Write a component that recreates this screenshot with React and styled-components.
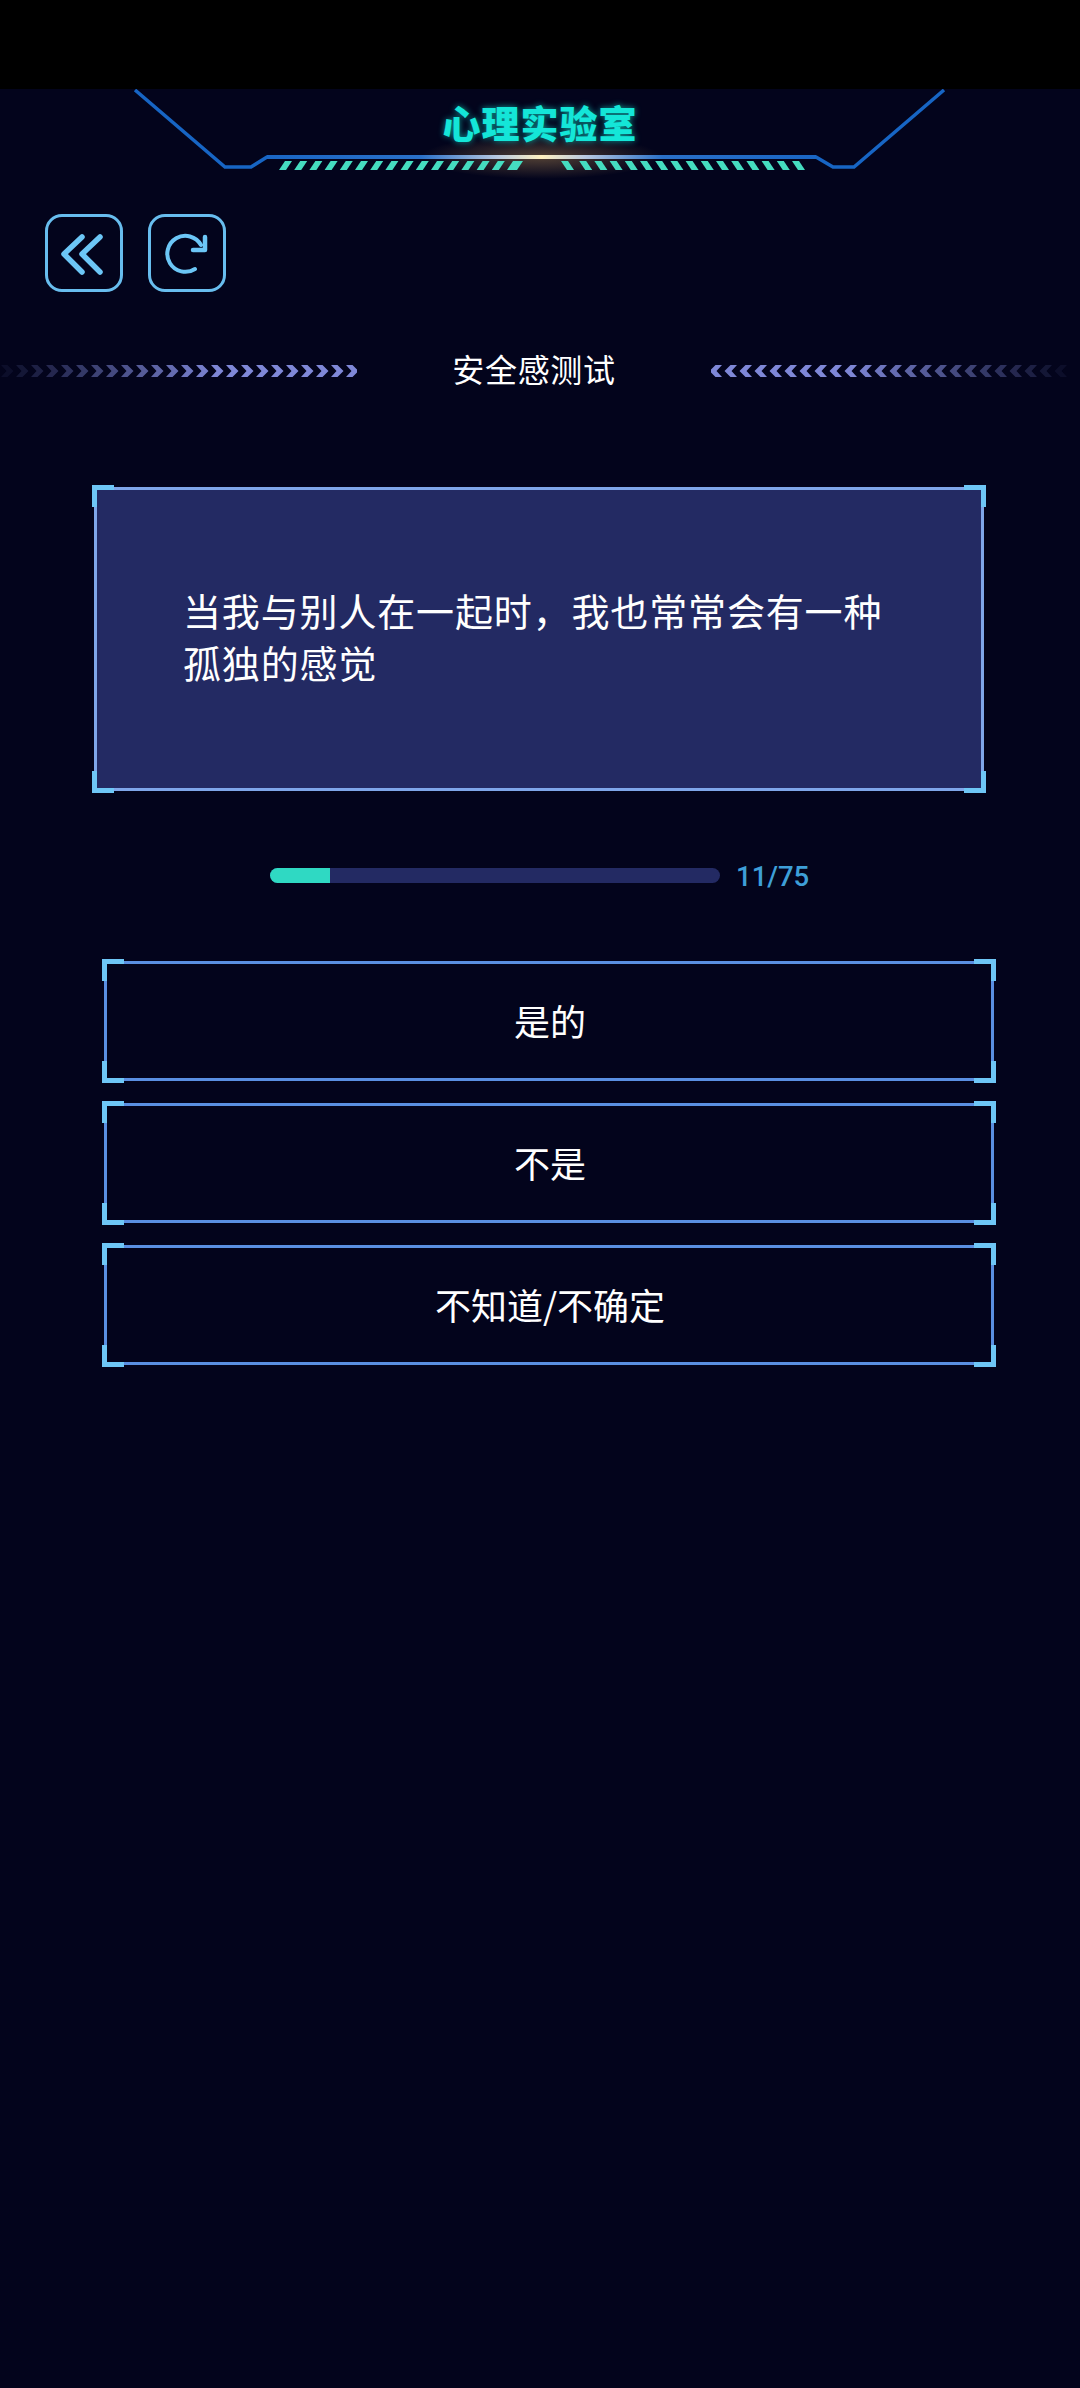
import React from "react";
import styled, { createGlobalStyle } from "styled-components";

const GlobalStyle = createGlobalStyle`
  html, body {
    margin: 0;
    padding: 0;
    background: #03041c;
  }
  body {
    font-family: "Noto Sans CJK SC", "Noto Sans", sans-serif;
    color: #fff;
  }
`;

const Page = styled.div`
  width: 1080px;
  height: 2388px;
  overflow: hidden;
  display: flex;
  flex-direction: column;
  background: #03041c;
`;

const StatusBar = styled.div`
  height: 89px;
  flex-shrink: 0;
  background: #000;
`;

const Header = styled.header`
  position: relative;
  height: 90px;
  flex-shrink: 0;
  display: flex;
  justify-content: center;
  align-items: flex-start;
`;

const HeaderArt = styled.svg`
  position: absolute;
  left: 0;
  top: 0;
`;

const AppTitle = styled.h1`
  position: relative;
  margin: 10px 0 0;
  font-size: 38px;
  line-height: 46px;
  font-weight: 900;
  letter-spacing: 1px;
  color: #14e6d8;
  text-shadow: 0 0 6px rgba(20, 230, 216, 0.65);
`;

const Actions = styled.div`
  display: flex;
  gap: 25px;
  padding: 35px 0 0 45px;
`;

const IconButton = styled.button`
  width: 78px;
  height: 78px;
  padding: 0;
  box-sizing: border-box;
  background: transparent;
  border: 3.5px solid #68bdee;
  border-radius: 17px;
  display: block;
  svg {
    display: block;
    margin: -3px;
  }
`;

const TitleRow = styled.div`
  display: flex;
  align-items: center;
  justify-content: space-between;
  margin-top: 54px;
  height: 50px;
  padding-right: 12px;
`;

const SectionTitle = styled.div`
  font-size: 32px;
  line-height: 44px;
  padding-bottom: 6px;
  letter-spacing: 0.7px;
  color: #fff;
`;

const Framed = styled.div`
  position: relative;
  box-sizing: border-box;
  border: 3.5px solid ${(p) => p.$line};
`;

const CornerMark = styled.span`
  position: absolute;
  width: 22px;
  height: 22px;
  box-sizing: border-box;
  ${(p) => p.$v}: -5px;
  ${(p) => p.$h}: -5px;
  border-${(p) => p.$v}: 5px solid #6ec6f6;
  border-${(p) => p.$h}: 5px solid #6ec6f6;
`;

const Corners = () => (
  <>
    <CornerMark $v="top" $h="left" />
    <CornerMark $v="top" $h="right" />
    <CornerMark $v="bottom" $h="left" />
    <CornerMark $v="bottom" $h="right" />
  </>
);

const QuestionCard = styled(Framed)`
  width: 890px;
  height: 304px;
  margin: 91px 0 0 94px;
  padding: 0 84px 6px 86px;
  background: #232a63;
  display: flex;
  align-items: center;
`;

const QuestionText = styled.p`
  margin: 0;
  font-size: 38px;
  line-height: 52px;
  letter-spacing: 0.85px;
  color: #fff;
`;

const ProgressRow = styled.div`
  display: flex;
  align-items: center;
  gap: 16px;
  margin: 66px 0 0 270px;
  height: 36px;
`;

const Track = styled.div`
  width: 450px;
  height: 15px;
  border-radius: 8px;
  background: #232a63;
  overflow: hidden;
`;

const Fill = styled.div`
  height: 100%;
  background: #2fd9c3;
`;

const ProgressText = styled.span`
  font-family: Roboto, sans-serif;
  font-size: 27.5px;
  font-weight: 500;
  line-height: 36px;
  padding-top: 3px;
  color: #3e9fd8;
`;

const Options = styled.div`
  display: flex;
  flex-direction: column;
  gap: 22px;
  margin: 68px 0 0 104px;
  width: 890px;
`;

const OptionBox = styled(Framed)`
  height: 120px;
  padding: 0 0 2px 2px;
  display: flex;
  align-items: center;
  justify-content: center;
  font-size: 36px;
  color: #fff;
`;

const ChevronStrip = ({ flip }) => {
  const items = Array.from({ length: 24 }, (_, i) => i);
  return (
    <svg width="357" height="14" viewBox="0 0 357 14">
      <g transform={flip ? "translate(357 0) scale(-1 1)" : undefined}>
        {items.map((i) => (
          <path
            key={i}
            d={`M${i * 15 + 1} 1h6.5l6 6-6 6h-6.5l5.5-6z`}
            fill="#7f88d8"
            opacity={Math.min(1, 0.08 + i * 0.065)}
          />
        ))}
      </g>
    </svg>
  );
};

const LeftStripes = Array.from({ length: 16 }, (_, i) => 279 + i * 15.2);
const RightStripes = Array.from({ length: 16 }, (_, i) => 564 + i * 15.2);

const HeaderDecor = () => (
  <HeaderArt width="1080" height="90" viewBox="0 0 1080 90">
    <defs>
      <radialGradient id="glow" cx="0.5" cy="0.5" r="0.5">
        <stop offset="0" stopColor="#c89a5a" stopOpacity="0.4" />
        <stop offset="1" stopColor="#c89a5a" stopOpacity="0" />
      </radialGradient>
      <linearGradient id="shine" x1="0" x2="1" y1="0" y2="0">
        <stop offset="0" stopColor="#1a66c4" />
        <stop offset="0.28" stopColor="#2a70c8" />
        <stop offset="0.42" stopColor="#b8c8e0" />
        <stop offset="0.5" stopColor="#fff0c0" />
        <stop offset="0.58" stopColor="#b8c8e0" />
        <stop offset="0.72" stopColor="#2a70c8" />
        <stop offset="1" stopColor="#1a66c4" />
      </linearGradient>
    </defs>
    <ellipse cx="541" cy="68" rx="120" ry="22" fill="url(#glow)" />
    <path
      d="M135 1 L225 78 H251 L267 68 H816 L833 78 H854 L944 1"
      fill="none"
      stroke="#1765c4"
      strokeWidth="3.5"
    />
    <rect x="267" y="66" width="549" height="4" fill="url(#shine)" />
    {LeftStripes.map((x, i) => (
      <path key={x} d={`M${x} 81 l6 -9 h${i === 15 ? 10 : 7} l-6 9z`} fill="#45dcc0" />
    ))}
    {RightStripes.map((x, i) => (
      <path key={x} d={`M${x} 72 l6 9 h7 l-6 -9z`} fill="#45dcc0" transform={i === 0 ? "translate(-3 0)" : undefined} />
    ))}
  </HeaderArt>
);

const BackIcon = () => (
  <svg width="78" height="78" viewBox="0 0 78 78" fill="none" stroke="#6cc6f6" strokeWidth="5.5" strokeLinecap="round" strokeLinejoin="round">
    <path d="M37 23 L19 40 L37 58" />
    <path d="M55 23 L37 40 L55 58" />
  </svg>
);

const RefreshIcon = () => (
  <svg width="78" height="78" viewBox="0 0 78 78" fill="none" stroke="#6cc6f6" strokeWidth="4" strokeLinecap="round" strokeLinejoin="round">
    <path d="M53 31 A18 18 0 1 0 47 55" />
    <path d="M57 23 V36 H45" strokeWidth="4.5" />
  </svg>
);

const options = ["是的", "不是", "不知道/不确定"];

const App = () => (
  <Page>
    <GlobalStyle />
    <StatusBar />
    <Header>
      <HeaderDecor />
      <AppTitle>心理实验室</AppTitle>
    </Header>
    <Actions>
      <IconButton>
        <BackIcon />
      </IconButton>
      <IconButton>
        <RefreshIcon />
      </IconButton>
    </Actions>
    <TitleRow>
      <ChevronStrip />
      <SectionTitle>安全感测试</SectionTitle>
      <ChevronStrip flip />
    </TitleRow>
    <QuestionCard $line="#7fa6ea">
      <Corners />
      <QuestionText>当我与别人在一起时，我也常常会有一种孤独的感觉</QuestionText>
    </QuestionCard>
    <ProgressRow>
      <Track>
        <Fill style={{ width: `${(11 / 75) * 91}%` }} />
      </Track>
      <ProgressText>11/75</ProgressText>
    </ProgressRow>
    <Options>
      {options.map((o) => (
        <OptionBox key={o} $line="#5a8fe2">
          <Corners />
          {o}
        </OptionBox>
      ))}
    </Options>
  </Page>
);

export default App;
